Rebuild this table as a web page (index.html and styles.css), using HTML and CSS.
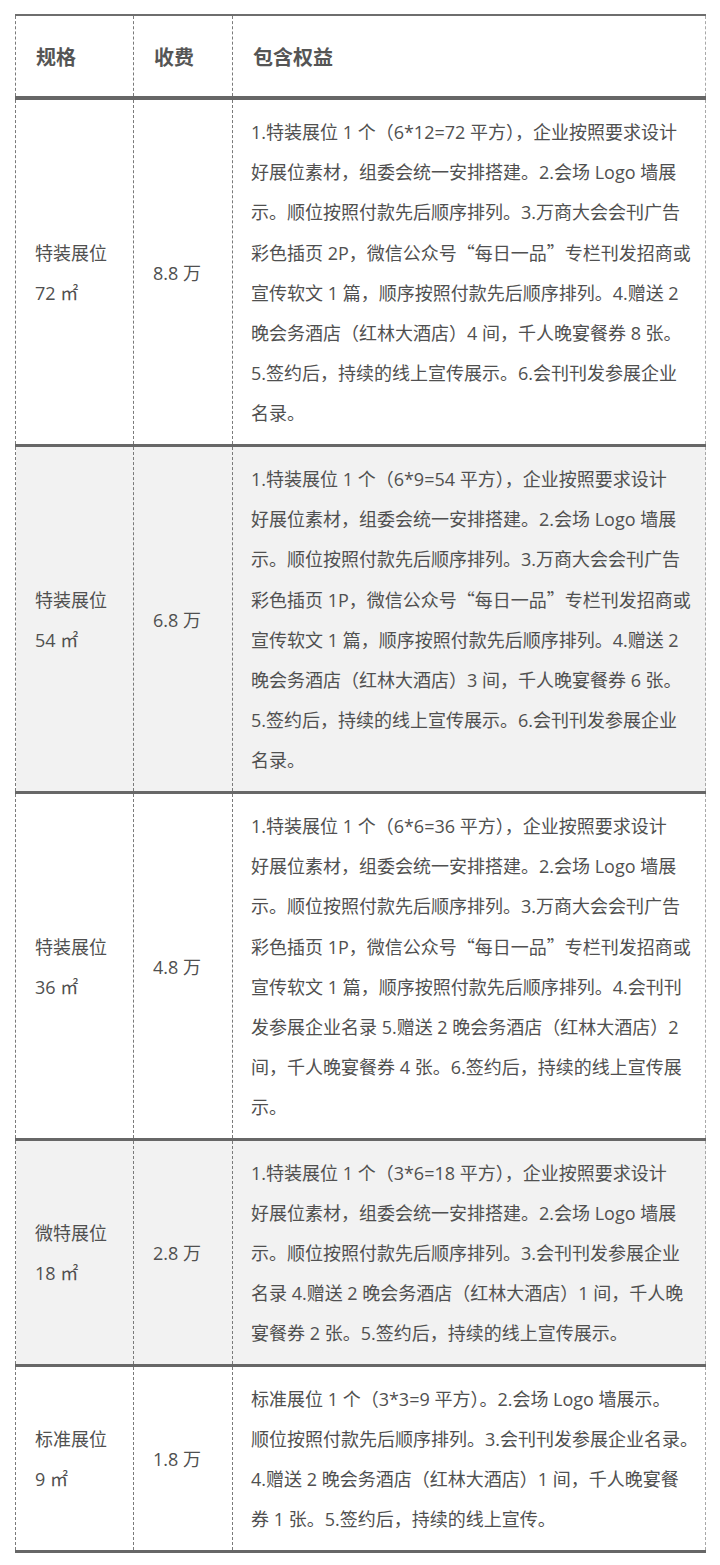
FILE: index.html
```html
<!DOCTYPE html>
<html lang="zh-CN">
<head>
<meta charset="utf-8">
<title>展位规格</title>
<link rel="stylesheet" href="styles.css">
</head>
<body>
<table class="price-table">
  <colgroup>
    <col class="c-spec">
    <col class="c-fee">
    <col class="c-benefit">
  </colgroup>
  <thead>
    <tr>
      <th>规格</th>
      <th>收费</th>
      <th>包含权益</th>
    </tr>
  </thead>
  <tbody>
    <tr>
      <td>特装展位<br>72 ㎡</td>
      <td>8.8 万</td>
      <td class="benefit">1.特装展位 1 个（6*12=72 平方），企业按照要求设计<br>好展位素材，组委会统一安排搭建。2.会场 Logo 墙展<br>示。顺位按照付款先后顺序排列。3.万商大会会刊广告<br>彩色插页 2P，微信公众号<span class="q">“</span>每日一品<span class="q">”</span>专栏刊发招商或<br>宣传软文 1 篇，顺序按照付款先后顺序排列。4.赠送 2<br>晚会务酒店（红林大酒店）4 间，千人晚宴餐券 8 张。<br>5.签约后，持续的线上宣传展示。6.会刊刊发参展企业<br>名录。</td>
    </tr>
    <tr class="alt">
      <td>特装展位<br>54 ㎡</td>
      <td>6.8 万</td>
      <td class="benefit">1.特装展位 1 个（6*9=54 平方），企业按照要求设计<br>好展位素材，组委会统一安排搭建。2.会场 Logo 墙展<br>示。顺位按照付款先后顺序排列。3.万商大会会刊广告<br>彩色插页 1P，微信公众号<span class="q">“</span>每日一品<span class="q">”</span>专栏刊发招商或<br>宣传软文 1 篇，顺序按照付款先后顺序排列。4.赠送 2<br>晚会务酒店（红林大酒店）3 间，千人晚宴餐券 6 张。<br>5.签约后，持续的线上宣传展示。6.会刊刊发参展企业<br>名录。</td>
    </tr>
    <tr>
      <td>特装展位<br>36 ㎡</td>
      <td>4.8 万</td>
      <td class="benefit">1.特装展位 1 个（6*6=36 平方），企业按照要求设计<br>好展位素材，组委会统一安排搭建。2.会场 Logo 墙展<br>示。顺位按照付款先后顺序排列。3.万商大会会刊广告<br>彩色插页 1P，微信公众号<span class="q">“</span>每日一品<span class="q">”</span>专栏刊发招商或<br>宣传软文 1 篇，顺序按照付款先后顺序排列。4.会刊刊<br>发参展企业名录 5.赠送 2 晚会务酒店（红林大酒店）2<br>间，千人晚宴餐券 4 张。6.签约后，持续的线上宣传展<br>示。</td>
    </tr>
    <tr class="alt">
      <td>微特展位<br>18 ㎡</td>
      <td>2.8 万</td>
      <td class="benefit">1.特装展位 1 个（3*6=18 平方），企业按照要求设计<br>好展位素材，组委会统一安排搭建。2.会场 Logo 墙展<br>示。顺位按照付款先后顺序排列。3.会刊刊发参展企业<br>名录 4.赠送 2 晚会务酒店（红林大酒店）1 间，千人晚<br>宴餐券 2 张。5.签约后，持续的线上宣传展示。</td>
    </tr>
    <tr>
      <td>标准展位<br>9 ㎡</td>
      <td>1.8 万</td>
      <td class="benefit">标准展位 1 个（3*3=9 平方）。2.会场 Logo 墙展示。<br>顺位按照付款先后顺序排列。3.会刊刊发参展企业名录。<br>4.赠送 2 晚会务酒店（红林大酒店）1 间，千人晚宴餐<br>券 1 张。5.签约后，持续的线上宣传。</td>
    </tr>
  </tbody>
</table>
</body>
</html>
```
FILE: styles.css
```css
html, body {
  margin: 0;
  padding: 0;
  background: #ffffff;
}

body {
  font-family: "Open Sans", "Noto Sans CJK SC", sans-serif;
  color: #505050;
}

.price-table {
  margin: 14px 0 0 15px;
  width: 690px;
  table-layout: fixed;
  border-collapse: collapse;
  border-top: 2px solid #6e6e6e;
  border-bottom: 3px solid #6a6a6a;
  border-left: 1px dashed #8a8a8a;
  border-right: 1px dashed #a8a8a8;
}

.c-spec { width: 118px; }
.c-fee { width: 99px; }
.c-benefit { width: 473px; }

.price-table th {
  font-size: 20px;
  font-weight: bold;
  color: #555555;
  text-align: left;
  line-height: 40px;
  padding: 22px 18px 18px 20px;
  border-bottom: 4px solid #676767;
  border-left: 1px dashed #7a7a7a;
}

.price-table td {
  font-size: 18px;
  line-height: 40px;
  text-align: left;
  vertical-align: middle;
  padding: 12px 18px 11px 19px;
  border-bottom: 3px solid #676767;
  border-left: 1px dashed #7a7a7a;
}

.price-table td.benefit {
  white-space: nowrap;
  padding-left: 18px;
  padding-right: 10px;
}

.price-table tr.alt td {
  background: #f2f2f2;
}

.q {
  font-family: "Noto Sans CJK SC", sans-serif;
}
```
